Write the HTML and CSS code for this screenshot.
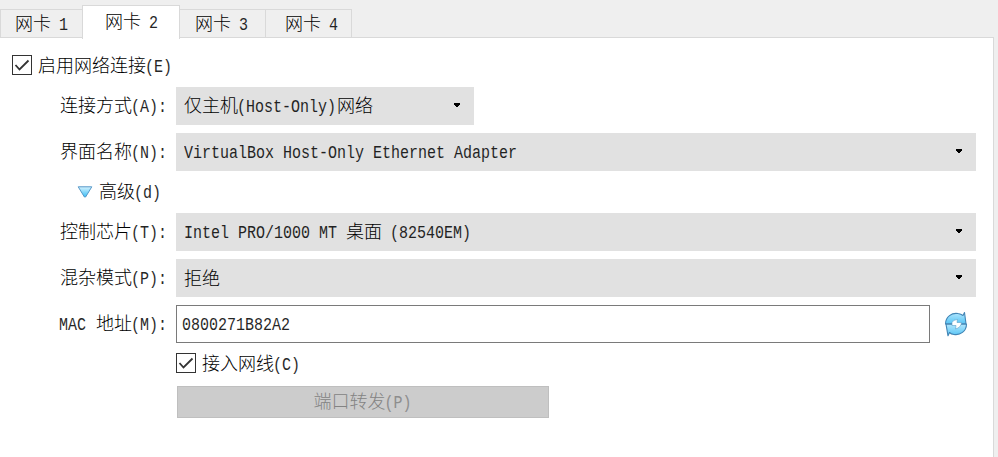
FILE: index.html
```html
<!DOCTYPE html>
<html lang="zh-CN">
<head>
<meta charset="utf-8">
<title>网络</title>
<link rel="stylesheet" href="styles.css">
</head>
<body>
<nav class="tabs">
  <div class="tab first">网卡<span class="en"> 1</span></div>
  <div class="tab active">网卡<span class="en"> 2</span></div>
  <div class="tab">网卡<span class="en"> 3</span></div>
  <div class="tab last">网卡<span class="en"> 4</span></div>
</nav>
<main class="panel">
  <div class="enable">
    <svg class="check" viewBox="0 0 20 20"><rect x=".5" y=".5" width="19" height="19"/><path d="M3.5 10l4 4.5 9-9"/></svg>
    <span class="text">启用网络连接<span class="en">(E)</span></span>
  </div>
  <div class="row">
    <div class="label">连接方式<span class="en">(A):</span></div>
    <div class="select short"><span class="text">仅主机<span class="en">(Host-Only)</span>网络</span><svg class="arrow" viewBox="0 0 6 4"><path d="M0 0h6v2H5v1H4v1H2V3H1V2H0z"/></svg></div>
  </div>
  <div class="row">
    <div class="label">界面名称<span class="en">(N):</span></div>
    <div class="select"><span class="text"><span class="en plain">VirtualBox Host-Only Ethernet Adapter</span></span><svg class="arrow" viewBox="0 0 6 4"><path d="M0 0h6v2H5v1H4v1H2V3H1V2H0z"/></svg></div>
  </div>
  <div class="advanced">
    <svg class="triangle" viewBox="0 0 16 12">
      <defs><linearGradient id="tri" x2="0" y2="1"><stop offset="0" stop-color="#d5f3ff"/><stop offset="1" stop-color="#39bdf5"/></linearGradient></defs>
      <path d="M1.2.8h13.6L8.6 11H7.4z" fill="url(#tri)" stroke="#5698c8"/>
    </svg>
    <span class="text">高级<span class="en">(d)</span></span>
  </div>
  <div class="row">
    <div class="label">控制芯片<span class="en">(T):</span></div>
    <div class="select"><span class="text"><span class="en plain">Intel PRO/1000 MT </span>桌面<span class="en"> (82540EM)</span></span><svg class="arrow" viewBox="0 0 6 4"><path d="M0 0h6v2H5v1H4v1H2V3H1V2H0z"/></svg></div>
  </div>
  <div class="row">
    <div class="label">混杂模式<span class="en">(P):</span></div>
    <div class="select"><span class="text">拒绝</span><svg class="arrow" viewBox="0 0 6 4"><path d="M0 0h6v2H5v1H4v1H2V3H1V2H0z"/></svg></div>
  </div>
  <div class="row">
    <div class="label"><span class="en">MAC </span>地址<span class="en">(M):</span></div>
    <div class="input"><span class="text"><span class="en plain">0800271B82A2</span></span></div>
    <svg class="refresh" viewBox="0 0 24 26">
      <defs><linearGradient id="ref" x2="0" y2="1"><stop offset="0" stop-color="#b4e7fd"/><stop offset="1" stop-color="#55c4f5"/></linearGradient></defs>
      <g fill="url(#ref)" stroke="#4285b5" stroke-width="1.1" stroke-linejoin="round">
        <path d="M1.500 13C1.500 5.500 8 1.500 14 2.500q3 .4 5 2L20.500 1.500 22 12.800H1.500z"/>
        <path d="M22.500 13C22.500 20.500 16 24.500 10 23.500q-3-.4-4.500-2L4 24.800 2 13.200H22.500z"/>
      </g>
      <path d="M8 11.500q1.500-3 5.500-3l-.5 3h4.500q-.5 5-6 6.500l.5-3.500H8z" fill="#fff" stroke="#5c9fc8" stroke-width=".6"/>
    </svg>
  </div>
  <div class="cable">
    <svg class="check" viewBox="0 0 20 20"><rect x=".5" y=".5" width="19" height="19"/><path d="M3.500 10l4 4.500 9-9"/></svg>
    <span class="text">接入网线<span class="en">(C)</span></span>
  </div>
  <div class="button"><span class="text">端口转发<span class="en">(P)</span></span></div>
</main>
</body>
</html>
```
FILE: styles.css
```css
* { box-sizing: border-box; }
body {
  margin: 0;
  height: 457px;
  overflow: hidden;
  background: #efefef;
  color: #000;
  font: 300 18px/24px "Noto Sans CJK SC", sans-serif;
}
.en {
  display: inline-block;
  font: 15px/20px "Liberation Mono", monospace;
  white-space: pre;
  opacity: .85;
  transform: translateX(-1px) scaleY(1.2);
  transform-origin: 0 70%;
}
.plain { transform: scaleY(1.2); }
.text, .label { padding-bottom: 2px; }
svg { display: block; flex: none; }
.tabs { display: flex; height: 37px; align-items: flex-end; }
.tab {
  width: 86px;
  height: 28px;
  padding-left: 15px;
  line-height: 24px;
  border: 1px solid #d9d9d9;
  border-width: 1px 1px 0 0;
}
.first { width: 82px; padding-left: 14px; border-width: 1px 0 0 1px; }
.last { padding-left: 19px; }
.active {
  width: 98px;
  height: 34px;
  margin-bottom: -2px;
  padding-left: 22px;
  line-height: 29px;
  border-width: 1px 1px 0 1px;
  background: #fff;
  position: relative;
}
.panel {
  width: 994px;
  height: 420px;
  padding-top: 8px;
  border: 1px solid #d9d9d9;
  border-width: 1px 1px 0 0;
  background: #fff;
}
.enable { display: flex; align-items: center; gap: 6px; height: 38px; margin-bottom: 3px; padding-left: 12px; }
.enable .text, .cable .text { padding-bottom: 0; }
.row { display: flex; align-items: center; height: 38px; margin-bottom: 8px; }
.label { width: 176px; padding-right: 8px; text-align: right; }
.select {
  display: flex;
  align-items: center;
  justify-content: space-between;
  width: 800px;
  height: 38px;
  padding: 0 14px 0 8px;
  background: #e1e1e1;
}
.short { width: 298px; }
.arrow { width: 6px; height: 4px; margin-top: -2px; }
.advanced { display: flex; align-items: center; gap: 6px; height: 42px; margin-top: -8px; padding-left: 77px; }
.triangle { width: 16px; height: 12px; }
.input { display: flex; align-items: center; width: 754px; height: 38px; padding-left: 5px; border: 1px solid #7a7a7a; }
.refresh { width: 24px; height: 26px; margin-left: 14px; }
.cable { display: flex; align-items: center; gap: 6px; height: 40px; margin-top: -8px; padding-left: 176px; }
.check { width: 20px; height: 20px; fill: none; stroke: #333; }
.check path { stroke-width: 1.8; }
.enable .check { margin-top: -1px; }
.button {
  display: flex;
  align-items: center;
  justify-content: center;
  width: 372px;
  height: 32px;
  margin: 3px 0 0 177px;
  border: 1px solid #bfbfbf;
  background: #ccc;
  color: #838383;
}
```
